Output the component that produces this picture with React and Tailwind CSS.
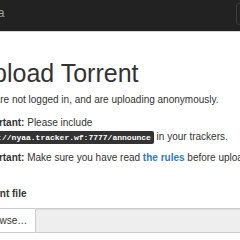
export default function App() {
    return (
        <div className="w-[240px] h-[240px] overflow-hidden bg-white text-[#333] font-['Liberation_Sans',Arial,sans-serif]">
            <nav className="h-[32px] bg-[#222] border-b border-[#d6d6d6] flex items-start">
                <span className="ml-[-25px] mt-[5px] text-[12.6px] leading-[16px] text-[#9d9d9d] whitespace-nowrap">
                    Nyaa
                </span>
                <div className="ml-auto mr-[-20px] mt-[3px] w-[24px] h-[22px] rounded-[3px] border border-[#3c3c3c] bg-[#222]" />
            </nav>

            <div className="ml-[-25px] w-[420px] whitespace-nowrap">
                <h1 className="mt-[28px] text-[25px] leading-[1.1] font-normal">Upload Torrent</h1>

                <p className="mt-[5px] text-[10px] leading-[14.3px]">
                    You are not logged in, and are uploading anonymously.
                </p>

                <p className="mt-[9px] text-[10px] leading-[14.3px]">
                    <strong>Important:</strong> Please include
                    <br />
                    <kbd className="px-[3px] py-[2px] rounded-[2px] bg-[#333] text-white text-[8px] font-bold font-['Liberation_Mono',monospace]">
                        http://nyaa.tracker.wf:7777/announce
                    </kbd>{' '}
                    in your trackers.
                </p>

                <p className="mt-[6px] text-[10px] leading-[14.3px]">
                    <strong>Important:</strong> Make sure you have read{' '}
                    <a className="font-bold text-[#337ab7]">the rules</a> before uploading!
                </p>

                <label className="block mt-[21px] text-[10px] leading-[14.3px] font-bold">Torrent file</label>

                <div className="mt-[7px] flex h-[25px] text-[10px]">
                    <span className="flex items-center px-[8px] bg-white border border-[#ccc] rounded-l-[3px]">
                        Browse…
                    </span>
                    <div className="flex-1 bg-[#eee] border border-l-0 border-[#ccc] shadow-[inset_0_1px_1px_rgba(0,0,0,0.075)]" />
                </div>
            </div>
        </div>
    );
}
